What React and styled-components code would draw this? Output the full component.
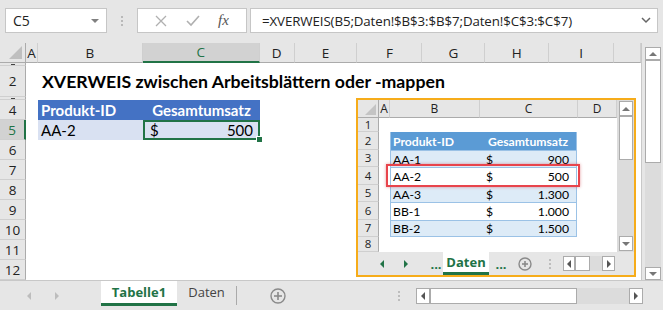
import React from 'react';
import styled, { createGlobalStyle } from 'styled-components';

const GlobalStyle = createGlobalStyle`
  html, body { margin: 0; padding: 0; background: #e6e6e6; }
  body { width: 663px; height: 310px; overflow: hidden; font-family: Lato, "Liberation Sans", sans-serif; }
`;

const UI_FONT = `"Open Sans", "Noto Sans", sans-serif`;
const CELL_FONT = `Lato, "Liberation Sans", sans-serif`;
const GREEN = '#217346';

const Window = styled.div`
  width: 663px;
  height: 310px;
  display: flex;
  flex-direction: column;
  background: #e6e6e6;
`;

/* ---------- formula bar ---------- */
const FormulaBar = styled.div`
  height: 43px;
  box-sizing: border-box;
  padding: 8px 5px 0 5px;
  display: flex;
  align-items: flex-start;
`;

const Box = styled.div`
  height: 25px;
  box-sizing: border-box;
  background: #fff;
  border: 1px solid #c6c6c6;
  display: flex;
  align-items: center;
  font: 14px ${UI_FONT};
  color: #222;
`;

const NameBox = styled(Box)`
  width: 102px;
  justify-content: space-between;
  padding: 0 7px 0 7px;
`;

const FxBox = styled(Box)`
  width: 110px;
  justify-content: space-around;
  padding: 0 8px;
  color: #b4b4b4;
`;

const FormulaInput = styled(Box)`
  flex: 1;
  margin-left: 3px;
  padding: 0 6px 0 11px;
  justify-content: space-between;
  font-size: 13.3px;
  letter-spacing: -0.1px;
`;

const Grip = styled.div`
  width: 30px;
  height: 25px;
  display: flex;
  flex-direction: column;
  align-items: center;
  justify-content: center;
  gap: 2px;
  span { width: 2px; height: 2px; background: #b9b9b9; display: block; }
`;

const Fx = styled.span`
  font: italic 15px "Liberation Serif", serif;
  color: #555;
`;

/* small solid triangle drawn with borders */
const Arrow = styled.span`
  display: block;
  flex: none;
  width: 0;
  height: 0;
  border: ${p => p.$s}px solid transparent;
  ${p => (p.$dir === 'left' ? `border-right-color: ${p.$c}; border-left-width: 0;` : '')}
  ${p => (p.$dir === 'right' ? `border-left-color: ${p.$c}; border-right-width: 0;` : '')}
  ${p => (p.$dir === 'up' ? `border-bottom-color: ${p.$c}; border-top-width: 0;` : '')}
  ${p => (p.$dir === 'down' ? `border-top-color: ${p.$c}; border-bottom-width: 0;` : '')}
`;

/* ---------- main grid ---------- */
const Main = styled.div`
  height: 237px;
  display: flex;
`;

const Sheet = styled.div`
  position: relative;
  width: 642px;
  display: flex;
  flex-direction: column;
  background: #fff;
  border-right: 1px solid #c8c8c8;
  box-sizing: border-box;
`;

const HeaderRow = styled.div`
  display: flex;
  height: 20px;
  background: #e6e6e6;
`;

const Corner = styled.div`
  width: 26px;
  box-sizing: border-box;
  border-right: 1px solid #ababab;
  border-bottom: 1px solid #ababab;
  position: relative;
  &::after {
    content: '';
    position: absolute;
    right: 3px;
    bottom: 3px;
    border-left: 13px solid transparent;
    border-bottom: 13px solid #bfbfbf;
  }
`;

const ColHead = styled.div`
  width: ${p => p.$w}px;
  box-sizing: border-box;
  border-right: 1px solid #cfcfcf;
  border-bottom: ${p => (p.$active ? `2px solid ${GREEN}` : '1px solid #ababab')};
  background: ${p => (p.$active ? '#d2d2d2' : '#e6e6e6')};
  color: ${p => (p.$active ? GREEN : '#222')};
  display: flex;
  align-items: center;
  justify-content: center;
  font: 13.5px ${UI_FONT};
`;

const Row = styled.div`
  display: flex;
  height: ${p => p.$h}px;
`;

const RowHead = styled.div`
  width: 26px;
  flex: none;
  box-sizing: border-box;
  border-bottom: 1px solid #cfcfcf;
  border-right: ${p => (p.$active ? `2px solid ${GREEN}` : '1px solid #ababab')};
  background: ${p => (p.$active ? '#d2d2d2' : '#e6e6e6')};
  color: ${p => (p.$active ? GREEN : '#222')};
  display: flex;
  align-items: center;
  justify-content: center;
  font: 13.5px ${UI_FONT};
  overflow: hidden;
`;

/* sliver of a digit shown in the very short rows */
const Sliver = styled.i`
  display: block;
  width: 4px;
  height: 1px;
  background: #444;
`;

const Cell = styled.div`
  position: relative;
  width: ${p => p.$w}px;
  flex: none;
  box-sizing: border-box;
  background: ${p => p.$bg || 'transparent'};
  color: ${p => p.$color || '#000'};
  font: ${p => (p.$bold ? 'bold ' : '')}15px ${CELL_FONT};
  display: flex;
  align-items: center;
  justify-content: ${p => p.$align || 'flex-start'};
  padding: 0 ${p => p.$pr || 3}px 0 ${p => p.$pl || 3}px;
  white-space: nowrap;
  border: ${p => (p.$selected ? `2px solid ${GREEN}` : 'none')};
`;

const Title = styled.div`
  align-self: flex-end;
  padding-bottom: 5px;
  font: bold 17.7px ${CELL_FONT};
  color: #000;
  overflow: visible;
`;

const FillHandle = styled.div`
  position: absolute;
  right: -5px;
  bottom: -5px;
  width: 5px;
  height: 5px;
  background: ${GREEN};
  border: 1px solid #fff;
  z-index: 1;
`;

const VScroll = styled.div`
  width: 21px;
  box-sizing: border-box;
  padding: 4px 2px 0 3px;
  display: flex;
  flex-direction: column;
`;

const ScrollTrack = styled.div`
  flex: 1;
  display: flex;
  flex-direction: column;
  background: #dcdcdc;
`;

const ArrowBtn = styled.div`
  width: ${p => p.$w || 16}px;
  height: ${p => p.$h || 13}px;
  box-sizing: border-box;
  background: #fff;
  border: 1px solid #ababab;
  display: flex;
  align-items: center;
  justify-content: center;
  flex: none;
`;

const Thumb = styled.div`
  height: ${p => p.$h}px;
  width: ${p => p.$w || 'auto'};
  flex: none;
  box-sizing: border-box;
  background: #fff;
  border: 1px solid #ababab;
`;

const Spacer = styled.div`
  flex: 1;
`;

/* ---------- embedded picture ---------- */
const Frame = styled.div`
  position: absolute;
  left: 356px;
  top: 55px;
  width: 280px;
  height: 179px;
  box-sizing: border-box;
  border: 2px solid #f6ac1a;
  background: #e6e6e6;
  display: flex;
  flex-direction: column;
`;

const MiniTop = styled.div`
  height: 152px;
  display: flex;
`;

const MiniSheet = styled.div`
  position: relative;
  width: 259px;
  display: flex;
  flex-direction: column;
  background: #fff;
`;

const MiniHeader = styled.div`
  height: 18px;
  display: flex;
  flex: none;
`;

const MiniCorner = styled.div`
  width: 21px;
  box-sizing: border-box;
  border-right: 1px solid #ababab;
  border-bottom: 1px solid #ababab;
  background: #e6e6e6;
  position: relative;
  &::after {
    content: '';
    position: absolute;
    right: 2px;
    bottom: 2px;
    border-left: 11px solid transparent;
    border-bottom: 11px solid #c4c4c4;
  }
`;

const MiniColHead = styled.div`
  width: ${p => p.$w}px;
  box-sizing: border-box;
  background: #e6e6e6;
  border-right: 1px solid #cfcfcf;
  border-bottom: 1px solid #ababab;
  display: flex;
  align-items: center;
  justify-content: center;
  font: 12px ${UI_FONT};
  color: #222;
`;

const MiniRow = styled.div`
  display: flex;
  height: ${p => p.$h}px;
  flex: none;
`;

const MiniRowHead = styled.div`
  width: 21px;
  box-sizing: border-box;
  background: #e6e6e6;
  border-right: 1px solid #ababab;
  border-bottom: 1px solid #cfcfcf;
  display: flex;
  align-items: center;
  justify-content: center;
  font: 11.5px/1 ${UI_FONT};
  color: #222;
  overflow: hidden;
`;

const MiniCell = styled.div`
  width: ${p => p.$w}px;
  box-sizing: border-box;
  background: ${p => p.$bg || 'transparent'};
  color: ${p => p.$color || '#000'};
  font: ${p => (p.$bold ? 'bold ' : '')}12.2px ${CELL_FONT};
  display: flex;
  align-items: center;
  justify-content: ${p => p.$align || 'flex-start'};
  padding: 0 ${p => p.$pr || 2}px 0 ${p => p.$pl || 2}px;
  white-space: nowrap;
  border-left: ${p => (p.$edgeL ? '1px solid #9bc2e6' : 'none')};
  border-right: ${p => (p.$edgeR ? '1px solid #9bc2e6' : 'none')};
  border-top: ${p => (p.$edgeT ? '1px solid #9bc2e6' : 'none')};
  border-bottom: ${p => (p.$tb ? '1px solid #9bc2e6' : 'none')};
`;

const Highlight = styled.div`
  position: absolute;
  left: 28px;
  top: 64px;
  width: 194px;
  height: 23px;
  box-sizing: border-box;
  border: 2.5px solid #e8444c;
  box-shadow: 0 0 3px rgba(200, 40, 50, 0.45);
`;

const MiniVScroll = styled.div`
  width: 17px;
  box-sizing: border-box;
  padding: 1px 1px 1px 2px;
  display: flex;
  flex-direction: column;
  background: #dcdcdc;
`;

/* ---------- tab bars ---------- */
const TabBar = styled.div`
  height: ${p => p.$h}px;
  display: flex;
  align-items: stretch;
  background: #e6e6e6;
  border-top: ${p => (p.$line ? '1px solid #c8c8c8' : 'none')};
  box-sizing: border-box;
`;

const NavArea = styled.div`
  width: ${p => p.$w}px;
  display: flex;
  align-items: center;
  padding-left: ${p => p.$pl}px;
  gap: ${p => p.$gap}px;
  box-sizing: border-box;
  flex: none;
`;

const Tab = styled.div`
  width: ${p => p.$w}px;
  flex: none;
  box-sizing: border-box;
  display: flex;
  align-items: center;
  justify-content: center;
  background: ${p => (p.$active ? '#fff' : 'transparent')};
  border-bottom: ${p => (p.$active ? `3px solid ${GREEN}` : '3px solid transparent')};
  color: ${p => (p.$active ? GREEN : '#444')};
  font: ${p => (p.$active ? 'bold ' : '')}${p => p.$size}px ${UI_FONT};
  margin-bottom: ${p => p.$mb}px;
`;

const Sep = styled.div`
  width: 1px;
  background: #aaa;
  margin: 5px 0 5px 0;
  flex: none;
`;

const Slot = styled.div`
  width: ${p => p.$w}px;
  margin-left: ${p => p.$ml || 0}px;
  flex: none;
  display: flex;
  align-items: center;
  justify-content: center;
  color: ${p => p.$color || '#888'};
  font: bold 13px ${UI_FONT};
`;

const HScroll = styled.div`
  width: ${p => p.$w}px;
  height: ${p => p.$h}px;
  align-self: center;
  display: flex;
  background: #dcdcdc;
  flex: none;
`;

const VDots = styled.div`
  display: flex;
  flex-direction: column;
  gap: 2px;
  span { width: 2px; height: 2px; background: #bdbdbd; display: block; }
`;

const PlusCircle = ({ r = 7 }) => (
  <svg width={2 * r + 2} height={2 * r + 2}>
    <circle cx={r + 1} cy={r + 1} r={r} fill="none" stroke="#8a8a8a" strokeWidth="1.4" />
    <line x1={r + 1} y1={4} x2={r + 1} y2={2 * r - 2} stroke="#8a8a8a" strokeWidth="1.6" />
    <line x1={4} y1={r + 1} x2={2 * r - 2} y2={r + 1} stroke="#8a8a8a" strokeWidth="1.6" />
  </svg>
);

const Dots3 = () => (
  <VDots><span /><span /><span /></VDots>
);

/* ---------- data ---------- */
const cols = [['A', 12], ['B', 105], ['C', 117], ['D', 35], ['E', 63], ['F', 65], ['G', 63], ['H', 64], ['I', 65], ['', 27]];
const rows = [[1, 3], [2, 31], [3, 3], [4, 20], [5, 20], [6, 20], [7, 20], [8, 20], [9, 20], [10, 20], [11, 20], [12, 20]];

const miniCols = [['A', 11], ['B', 90], ['C', 98], ['D', 39]];
const miniRows = [[1, 14], [2, 18], [3, 17], [4, 18], [5, 17], [6, 18], [7, 17], [8, 15]];
const miniData = {
  3: ['AA-1', '900'],
  4: ['AA-2', '500'],
  5: ['AA-3', '1.300'],
  6: ['BB-1', '1.000'],
  7: ['BB-2', '1.500'],
};

function mainCells(r) {
  return cols.map(([c, w]) => {
    const key = c || 'J';
    if (r === 2 && c === 'B') {
      return (
        <Cell key={key} $w={w} $pl={4}>
          <Title>XVERWEIS zwischen Arbeitsblättern oder -mappen</Title>
        </Cell>
      );
    }
    if (r === 4 && c === 'B') return <Cell key={key} $w={w} $bg="#4472c4" $color="#fff" $bold>Produkt-ID</Cell>;
    if (r === 4 && c === 'C') return <Cell key={key} $w={w} $bg="#4472c4" $color="#fff" $bold $align="center">Gesamtumsatz</Cell>;
    if (r === 5 && c === 'B') return <Cell key={key} $w={w} $bg="#d9e1f2">AA-2</Cell>;
    if (r === 5 && c === 'C') {
      return (
        <Cell key={key} $w={w} $bg="#d9e1f2" $selected $align="space-between" $pl={5} $pr={5}>
          <span>$</span><span>500</span>
          <FillHandle />
        </Cell>
      );
    }
    return <Cell key={key} $w={w} />;
  });
}

function miniCells(r) {
  return miniCols.map(([c, w]) => {
    if (r === 2 && c === 'B') return <MiniCell key={c} $w={w} $bg="#5b9bd5" $color="#fff" $bold $edgeL>Produkt-ID</MiniCell>;
    if (r === 2 && c === 'C') return <MiniCell key={c} $w={w - 1} $bg="#5b9bd5" $color="#fff" $bold $align="center" $edgeR>Gesamtumsatz</MiniCell>;
    const d = miniData[r];
    if (d) {
      const bg = r % 2 === 1 ? '#ddebf7' : '#fff';
      const last = r === 7;
      if (c === 'B') return <MiniCell key={c} $w={w} $bg={bg} $edgeL $tb={last} $edgeT>{d[0]}</MiniCell>;
      if (c === 'C') {
        return (
          <MiniCell key={c} $w={w - 1} $bg={bg} $edgeR $tb={last} $edgeT $align="space-between" $pl={6} $pr={7}>
            <span>$</span><span>{d[1]}</span>
          </MiniCell>
        );
      }
    }
    return <MiniCell key={c} $w={c === 'D' ? w + 1 : w} />;
  });
}

function MiniPicture() {
  return (
    <Frame>
      <MiniTop>
        <MiniSheet>
          <MiniHeader>
            <MiniCorner />
            {miniCols.map(([c, w]) => <MiniColHead key={c} $w={w}>{c}</MiniColHead>)}
          </MiniHeader>
          {miniRows.map(([r, h]) => (
            <MiniRow key={r} $h={h}>
              <MiniRowHead>{r}</MiniRowHead>
              {miniCells(r)}
            </MiniRow>
          ))}
          <Highlight />
        </MiniSheet>
        <MiniVScroll>
          <ArrowBtn $w={14} $h={15}><Arrow $dir="up" $s={4} $c="#777" /></ArrowBtn>
          <Thumb $h={44} />
          <Spacer />
          <ArrowBtn $w={14} $h={15}><Arrow $dir="down" $s={4} $c="#777" /></ArrowBtn>
        </MiniVScroll>
      </MiniTop>
      <TabBar $h={23}>
        <NavArea $w={85} $pl={22} $gap={20}>
          <Arrow $dir="left" $s={4} $c={GREEN} />
          <Arrow $dir="right" $s={4} $c={GREEN} />
          <Slot $w={20} $ml={-2} $color={GREEN}>...</Slot>
        </NavArea>
        <Tab $w={46} $active $size={13} $mb={0}>Daten</Tab>
        <Slot $w={24} $color={GREEN}>...</Slot>
        <Slot $w={24}><PlusCircle r={6} /></Slot>
        <Slot $w={26}><Dots3 /></Slot>
        <HScroll $w={52} $h={15}>
          <ArrowBtn $w={12} $h={15}><Arrow $dir="left" $s={4} $c="#555" /></ArrowBtn>
          <Thumb $h={15} $w="15px" />
          <Spacer />
          <ArrowBtn $w={13} $h={15}><Arrow $dir="right" $s={4} $c="#555" /></ArrowBtn>
        </HScroll>
      </TabBar>
    </Frame>
  );
}

export default function App() {
  return (
    <Window>
      <GlobalStyle />
      <FormulaBar>
        <NameBox>
          <span>C5</span>
          <Arrow $dir="down" $s={4.5} $c="#808080" />
        </NameBox>
        <Grip><span /><span /><span /></Grip>
        <FxBox>
          <svg width="12" height="12"><path d="M1 1 L11 11 M11 1 L1 11" stroke="#b0b0b0" strokeWidth="1.3" /></svg>
          <svg width="14" height="12"><path d="M1 6 L5 10 L13 1" stroke="#b0b0b0" strokeWidth="1.6" fill="none" /></svg>
          <Fx>fx</Fx>
        </FxBox>
        <FormulaInput>
          <span>=XVERWEIS(B5;Daten!$B$3:$B$7;Daten!$C$3:$C$7)</span>
          <svg width="10" height="7"><path d="M1 1 L5 5 L9 1" stroke="#666" strokeWidth="1.5" fill="none" /></svg>
        </FormulaInput>
      </FormulaBar>
      <Main>
        <Sheet>
          <HeaderRow>
            <Corner />
            {cols.map(([c, w]) => <ColHead key={c || 'J'} $w={w} $active={c === 'C'}>{c}</ColHead>)}
          </HeaderRow>
          {rows.map(([r, h]) => (
            <Row key={r} $h={h}>
              <RowHead $active={r === 5}>{h < 10 ? <Sliver /> : r}</RowHead>
              {mainCells(r)}
            </Row>
          ))}
          <MiniPicture />
        </Sheet>
        <VScroll>
          <ScrollTrack>
            <ArrowBtn $w={16} $h={13}><Arrow $dir="up" $s={4} $c="#777" /></ArrowBtn>
            <Thumb $h={103} />
            <Spacer />
            <ArrowBtn $w={16} $h={13}><Arrow $dir="down" $s={4} $c="#777" /></ArrowBtn>
          </ScrollTrack>
        </VScroll>
      </Main>
      <TabBar $h={30} $line>
        <NavArea $w={101} $pl={27} $gap={24}>
          <Arrow $dir="left" $s={4} $c="#bdbdbd" />
          <Arrow $dir="right" $s={4} $c="#bdbdbd" />
        </NavArea>
        <Tab $w={76} $active $size={13} $mb={4}>Tabelle1</Tab>
        <Tab $w={59} $size={13} $mb={4}>Daten</Tab>
        <Sep />
        <Slot $w={82}><PlusCircle r={7} /></Slot>
        <Slot $w={34} $ml={63}><Dots3 /></Slot>
        <HScroll $w={227} $h={16}>
          <ArrowBtn $w={14} $h={16}><Arrow $dir="left" $s={4} $c="#555" /></ArrowBtn>
          <Thumb $h={16} $w="147px" />
          <Spacer />
          <ArrowBtn $w={14} $h={16}><Arrow $dir="right" $s={4} $c="#555" /></ArrowBtn>
        </HScroll>
      </TabBar>
    </Window>
  );
}
